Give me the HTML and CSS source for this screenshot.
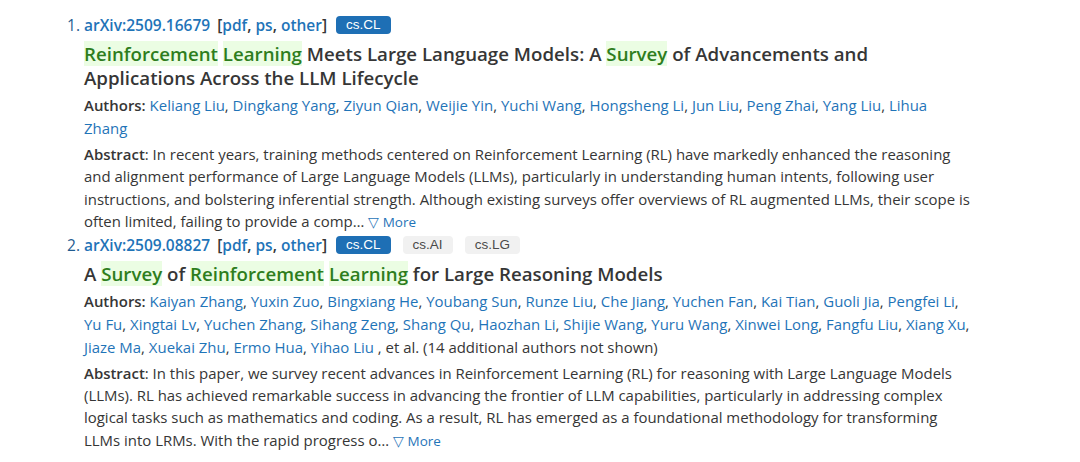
FILE: index.html
```html
<!DOCTYPE html>
<html>
<head>
<meta charset="utf-8">
<link rel="stylesheet" href="styles.css">
</head>
<body>
<ol class="results">
  <li class="result">
    <div class="head">
      <a class="id" href="#">arXiv:2509.16679</a>
      <span class="formats">[<a href="#">pdf</a>, <a href="#">ps</a>, <a href="#">other</a>]</span>
      <span class="tags"><span class="tag primary">cs.CL</span></span>
    </div>
    <p class="title"><span class="hl">Reinforcement</span> <span class="hl">Learning</span> Meets Large Language Models: A <span class="hl">Survey</span> of Advancements and Applications Across the LLM Lifecycle</p>
    <p class="authors"><span class="label">Authors:</span> <a href="#">Keliang Liu</a>, <a href="#">Dingkang Yang</a>, <a href="#">Ziyun Qian</a>, <a href="#">Weijie Yin</a>, <a href="#">Yuchi Wang</a>, <a href="#">Hongsheng Li</a>, <a href="#">Jun Liu</a>, <a href="#">Peng Zhai</a>, <a href="#">Yang Liu</a>, <a href="#">Lihua Zhang</a></p>
    <p class="abstract"><span class="label">Abstract</span>: In recent years, training methods centered on Reinforcement Learning (RL) have markedly enhanced the reasoning and alignment performance of Large Language Models (LLMs), particularly in understanding human intents, following user instructions, and bolstering inferential strength. Although existing surveys offer overviews of RL augmented LLMs, their scope is often limited, failing to provide a comp&hellip; <a class="more" href="#">&#9661; More</a></p>
  </li>
  <li class="result">
    <div class="head">
      <a class="id" href="#">arXiv:2509.08827</a>
      <span class="formats">[<a href="#">pdf</a>, <a href="#">ps</a>, <a href="#">other</a>]</span>
      <span class="tags"><span class="tag primary">cs.CL</span><span class="tag">cs.AI</span><span class="tag">cs.LG</span></span>
    </div>
    <p class="title">A <span class="hl">Survey</span> of <span class="hl">Reinforcement</span> <span class="hl">Learning</span> for Large Reasoning Models</p>
    <p class="authors"><span class="label">Authors:</span> <a href="#">Kaiyan Zhang</a>, <a href="#">Yuxin Zuo</a>, <a href="#">Bingxiang He</a>, <a href="#">Youbang Sun</a>, <a href="#">Runze Liu</a>, <a href="#">Che Jiang</a>, <a href="#">Yuchen Fan</a>, <a href="#">Kai Tian</a>, <a href="#">Guoli Jia</a>, <a href="#">Pengfei Li</a>, <a href="#">Yu Fu</a>, <a href="#">Xingtai Lv</a>, <a href="#">Yuchen Zhang</a>, <a href="#">Sihang Zeng</a>, <a href="#">Shang Qu</a>, <a href="#">Haozhan Li</a>, <a href="#">Shijie Wang</a>, <a href="#">Yuru Wang</a>, <a href="#">Xinwei Long</a>, <a href="#">Fangfu Liu</a>, <a href="#">Xiang Xu</a>, <a href="#">Jiaze Ma</a>, <a href="#">Xuekai Zhu</a>, <a href="#">Ermo Hua</a>, <a href="#">Yihao Liu</a> , et al. (14 additional authors not shown)</p>
    <p class="abstract"><span class="label">Abstract</span>: In this paper, we survey recent advances in Reinforcement Learning (RL) for reasoning with Large Language Models (LLMs). RL has achieved remarkable success in advancing the frontier of LLM capabilities, particularly in addressing complex logical tasks such as mathematics and coding. As a result, RL has emerged as a foundational methodology for transforming LLMs into LRMs. With the rapid progress o&hellip; <a class="more" href="#">&#9661; More</a></p>
  </li>
</ol>
</body>
</html>
```

FILE: styles.css
```css
html, body {
  margin: 0;
  padding: 0;
  background: #ffffff;
}

body {
  font-family: "Open Sans", "Noto Sans", sans-serif;
  color: #363636;
  width: 1080px;
  height: 462px;
  overflow: hidden;
}

a {
  color: #1f74b8;
  text-decoration: none;
}

.results {
  margin: 0;
  padding: 14px 0 0 84px;
  width: 890px;
  list-style: decimal outside;
}

.result {
  font-size: 15px;
  color: #363636;
}

.result::marker {
  color: #1f5b8f;
  font-size: 15.5px;
}

.head {
  display: flex;
  align-items: center;
  height: 22px;
  font-weight: 600;
  font-size: 15.5px;
}

.head .id {
  margin-right: 7px;
}

.formats {
  color: #363636;
  margin-right: 9px;
}

.tags {
  display: flex;
  gap: 12px;
}

.tag {
  font-family: "Liberation Sans", Arial, sans-serif;
  font-weight: 400;
  font-size: 13.5px;
  line-height: 18px;
  padding: 0 10px;
  border-radius: 4px;
  background: #f1f1f1;
  color: #4a4a4a;
}

.tag.primary {
  background: #1e6fb5;
  color: #ffffff;
}

.title {
  margin: 6px 0 0;
  font-size: 18.7px;
  line-height: 24px;
  font-weight: 600;
  color: #363636;
}

.hl {
  background: #ebfde3;
  color: #2e7d1d;
}

.authors {
  margin: 4px 0 0;
  font-size: 14.95px;
  line-height: 23px;
}

.label {
  font-weight: 600;
  color: #363636;
}

.abstract {
  margin: 3px 0 0;
  font-size: 14.95px;
  line-height: 22.4px;
}

.more {
  font-size: 13.5px;
}
```
